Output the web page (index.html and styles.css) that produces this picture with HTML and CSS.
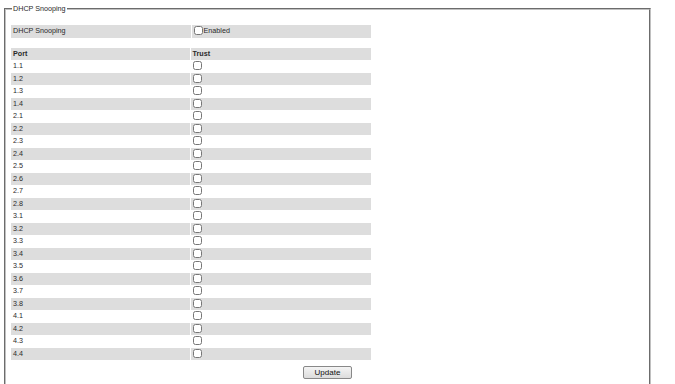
FILE: index.html
```html
<!DOCTYPE html>
<html lang="en">
<head>
    <meta charset="UTF-8">
    <title>DHCP Snooping</title>
    <link rel="stylesheet" href="styles.css">
</head>
<body>
<fieldset class="box">
    <legend>DHCP Snooping</legend>

    <table class="grid top">
        <tr class="shade">
            <td class="name">DHCP Snooping</td>
            <td><label><input type="checkbox">Enabled</label></td>
        </tr>
    </table>

    <table class="grid ports">
        <tr class="shade head">
            <td class="name">Port</td>
            <td>Trust</td>
        </tr>
        <tr><td class="name">1.1</td><td><input type="checkbox"></td></tr>
        <tr class="shade"><td class="name">1.2</td><td><input type="checkbox"></td></tr>
        <tr><td class="name">1.3</td><td><input type="checkbox"></td></tr>
        <tr class="shade"><td class="name">1.4</td><td><input type="checkbox"></td></tr>
        <tr><td class="name">2.1</td><td><input type="checkbox"></td></tr>
        <tr class="shade"><td class="name">2.2</td><td><input type="checkbox"></td></tr>
        <tr><td class="name">2.3</td><td><input type="checkbox"></td></tr>
        <tr class="shade"><td class="name">2.4</td><td><input type="checkbox"></td></tr>
        <tr><td class="name">2.5</td><td><input type="checkbox"></td></tr>
        <tr class="shade"><td class="name">2.6</td><td><input type="checkbox"></td></tr>
        <tr><td class="name">2.7</td><td><input type="checkbox"></td></tr>
        <tr class="shade"><td class="name">2.8</td><td><input type="checkbox"></td></tr>
        <tr><td class="name">3.1</td><td><input type="checkbox"></td></tr>
        <tr class="shade"><td class="name">3.2</td><td><input type="checkbox"></td></tr>
        <tr><td class="name">3.3</td><td><input type="checkbox"></td></tr>
        <tr class="shade"><td class="name">3.4</td><td><input type="checkbox"></td></tr>
        <tr><td class="name">3.5</td><td><input type="checkbox"></td></tr>
        <tr class="shade"><td class="name">3.6</td><td><input type="checkbox"></td></tr>
        <tr><td class="name">3.7</td><td><input type="checkbox"></td></tr>
        <tr class="shade"><td class="name">3.8</td><td><input type="checkbox"></td></tr>
        <tr><td class="name">4.1</td><td><input type="checkbox"></td></tr>
        <tr class="shade"><td class="name">4.2</td><td><input type="checkbox"></td></tr>
        <tr><td class="name">4.3</td><td><input type="checkbox"></td></tr>
        <tr class="shade"><td class="name">4.4</td><td><input type="checkbox"></td></tr>
    </table>

    <div class="actions">
        <button type="button">Update</button>
    </div>
</fieldset>
</body>
</html>
```

FILE: styles.css
```css
*{
    box-sizing:border-box;
}

body{
    margin:0;
    padding:4px 4px 0;
    font-family:"Liberation Sans", Arial, sans-serif;
    font-size:7.2px;
    color:#2a2a2a;
}

.box{
    width:647px;
    margin:0;
    padding:4px 4px 20px 4px;
    border:2px groove #c0c0c0;
    min-height:420px;
}

.box legend{
    padding:0 1px;
    margin-left:2px;
    font-size:7.2px;
    line-height:9px;
}

.grid{
    width:362px;
    border-spacing:1px 0;
}

.grid td{
    width:180px;
    height:12.5px;
    padding:0 1px;
    vertical-align:middle;
    line-height:10px;
}

.grid td.name{
    padding-left:2px;
}

.top{
    margin-top:8px;
}

.ports{
    margin-top:10px;
}

.shade td{
    background-color:#dddddd;
}

.head td{
    font-weight:bold;
}

input[type=checkbox]{
    width:9px;
    height:9px;
    margin:0 1px 0 1px;
    vertical-align:-2px;
}

.actions{
    text-align:center;
    margin-top:6px;
}

.actions button{
    font-family:"Liberation Sans", Arial, sans-serif;
    font-size:8px;
    width:49px;
    height:13px;
    padding:0;
    border:1px solid #888;
    border-radius:2px;
    background:linear-gradient(#f4f4f4, #dcdcdc);
    color:#111;
}
```
